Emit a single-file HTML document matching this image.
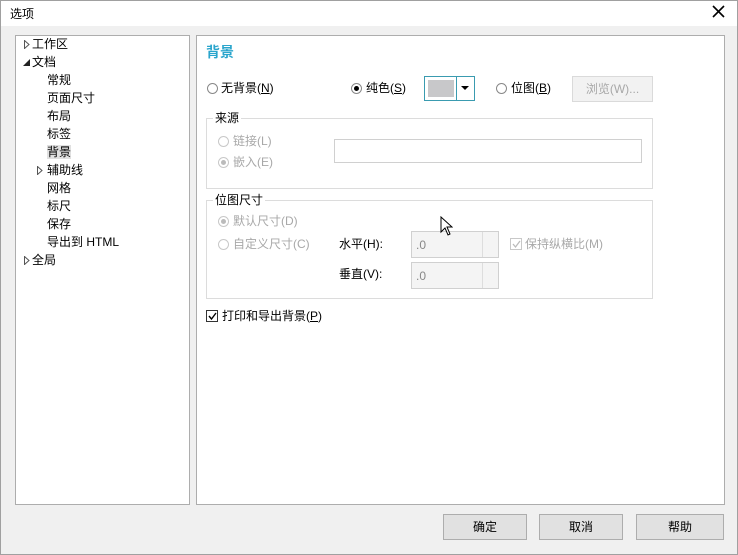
<!DOCTYPE html>
<html><head><meta charset="utf-8"><style>
*{margin:0;padding:0;box-sizing:border-box}
body{width:738px;height:555px;background:#f0f0f0;font-family:"Liberation Sans","Noto Sans CJK SC",sans-serif;font-size:12px;color:#000;position:relative;overflow:hidden}
.a{position:absolute;white-space:nowrap}
.panel{position:absolute;background:#fff;border:1px solid #adadad}
.t{position:absolute;line-height:18px}
.dis{color:#a8a8a8}
.rad{position:absolute;width:11px;height:11px;border:1px solid #888;border-radius:50%;background:#fff}
.rad.on::after{content:"";position:absolute;left:2px;top:2px;width:5px;height:5px;border-radius:50%;background:#000}
.rad.d{border-color:#c8c8c8}
.rad.d.on::after{background:#bbb}
.grp{position:absolute;border:1px solid #dcdcdc}
.grp span{position:absolute;top:-9px;left:6px;background:#fff;padding:0 2px;line-height:16px}
.btn{position:absolute;height:26px;border:1px solid #adadad;background:#e1e1e1;text-align:center;line-height:24px}
.inp{position:absolute;border:1px solid #d0d0d0;background:#f4f4f4}
.tree div{height:18px;line-height:18px;position:relative}
.tri{position:absolute;top:5px}
</style></head><body>
<div class="a" style="left:0;top:0;width:738px;height:555px;border:1px solid #a0a0a0"></div>
<div class="a" style="left:1px;top:1px;width:736px;height:25px;background:#fff"></div>
<div class="a" style="left:10px;top:5px;font-size:12px">选项</div>
<svg class="a" style="left:712px;top:5px" width="13" height="13"><path d="M1 1L12 12M12 1L1 12" stroke="#000" stroke-width="1.6"/></svg>

<div class="panel" style="left:15px;top:35px;width:175px;height:470px"></div>
<div class="a tree" style="left:22px;top:35px">
<div style="padding-left:10px"><svg class="tri" style="left:2px" width="6" height="9"><path d="M0.5 0.5V8.5L5 4.5Z" fill="none" stroke="#555"/></svg>工作区</div>
<div style="padding-left:10px"><svg class="tri" style="left:1px;top:6px" width="7" height="7"><path d="M7 0V7H0Z" fill="#222"/></svg>文档</div>
<div style="padding-left:25px">常规</div>
<div style="padding-left:25px">页面尺寸</div>
<div style="padding-left:25px">布局</div>
<div style="padding-left:25px">标签</div>
<div style="padding-left:25px"><span style="background:#e0e0e0">背景</span></div>
<div style="padding-left:25px"><svg class="tri" style="left:15px" width="6" height="9"><path d="M0.5 0.5V8.5L5 4.5Z" fill="none" stroke="#555"/></svg>辅助线</div>
<div style="padding-left:25px">网格</div>
<div style="padding-left:25px">标尺</div>
<div style="padding-left:25px">保存</div>
<div style="padding-left:25px">导出到 HTML</div>
<div style="padding-left:10px"><svg class="tri" style="left:2px" width="6" height="9"><path d="M0.5 0.5V8.5L5 4.5Z" fill="none" stroke="#555"/></svg>全局</div>
</div>

<div class="panel" style="left:196px;top:35px;width:529px;height:470px"></div>
<div class="a" style="left:206px;top:42px;font-size:14px;font-weight:bold;color:#2aa5cc">背景</div>

<div class="rad" style="left:207px;top:83px"></div><div class="t" style="left:221px;top:79px">无背景(<u>N</u>)</div>
<div class="rad on" style="left:351px;top:83px"></div><div class="t" style="left:366px;top:79px">纯色(<u>S</u>)</div>
<div class="a" style="left:424px;top:76px;width:51px;height:25px;border:1px solid #3a9bb0;background:#fff"></div>
<div class="a" style="left:428px;top:80px;width:26px;height:17px;background:#c8c8ca"></div>
<div class="a" style="left:456px;top:77px;width:1px;height:23px;background:#3a9bb0"></div>
<svg class="a" style="left:461px;top:86px" width="8" height="5"><path d="M0 0H8L4 4Z" fill="#000"/></svg>
<div class="rad" style="left:496px;top:83px"></div><div class="t" style="left:511px;top:79px">位图(<u>B</u>)</div>
<div class="a dis" style="left:572px;top:76px;width:81px;height:26px;border:1px solid #dadada;background:#f2f2f2;text-align:center;line-height:24px">浏览(W)...</div>

<div class="grp" style="left:206px;top:118px;width:447px;height:71px"><span>来源</span></div>
<div class="rad d" style="left:218px;top:136px"></div><div class="t dis" style="left:233px;top:132px">链接(L)</div>
<div class="rad d on" style="left:218px;top:157px"></div><div class="t dis" style="left:233px;top:153px">嵌入(E)</div>
<div class="a" style="left:334px;top:139px;width:308px;height:24px;border:1px solid #d0d0d0;background:#fff"></div>

<div class="grp" style="left:206px;top:200px;width:447px;height:99px"><span>位图尺寸</span></div>
<div class="rad d on" style="left:218px;top:216px"></div><div class="t dis" style="left:233px;top:212px">默认尺寸(D)</div>
<div class="rad d" style="left:218px;top:239px"></div><div class="t dis" style="left:233px;top:235px">自定义尺寸(C)</div>
<div class="t" style="left:339px;top:235px">水平(H):</div>
<div class="t" style="left:339px;top:265px">垂直(V):</div>
<div class="inp" style="left:411px;top:231px;width:88px;height:27px"></div>
<div class="a" style="left:482px;top:232px;width:1px;height:25px;background:#ddd"></div>
<div class="t dis" style="left:416px;top:236px;color:#888">.0</div>
<div class="inp" style="left:411px;top:262px;width:88px;height:27px"></div>
<div class="a" style="left:482px;top:263px;width:1px;height:25px;background:#ddd"></div>
<div class="t dis" style="left:416px;top:267px;color:#888">.0</div>
<div class="a" style="left:510px;top:238px;width:12px;height:12px;border:1px solid #c8c8c8;background:#fff"></div>
<svg class="a" style="left:511px;top:239px" width="11" height="11"><path d="M2 5L4.5 8L9 2" stroke="#bbb" stroke-width="1.3" fill="none"/></svg>
<div class="t dis" style="left:525px;top:235px">保持纵横比(M)</div>
<svg class="a" style="left:440px;top:216px" width="13" height="20"><path d="M1 1V16L5 12L8 19L10 18L7 11H12Z" fill="#fff" stroke="#000"/></svg>

<div class="a" style="left:206px;top:310px;width:12px;height:12px;border:1px solid #333;background:#fff"></div>
<svg class="a" style="left:207px;top:311px" width="11" height="11"><path d="M2 5L4.5 8L9 2" stroke="#000" stroke-width="1.4" fill="none"/></svg>
<div class="t" style="left:222px;top:307px">打印和导出背景(<u>P</u>)</div>

<div class="btn" style="left:443px;top:514px;width:84px">确定</div>
<div class="btn" style="left:539px;top:514px;width:84px">取消</div>
<div class="btn" style="left:636px;top:514px;width:88px">帮助</div>
</body></html>
